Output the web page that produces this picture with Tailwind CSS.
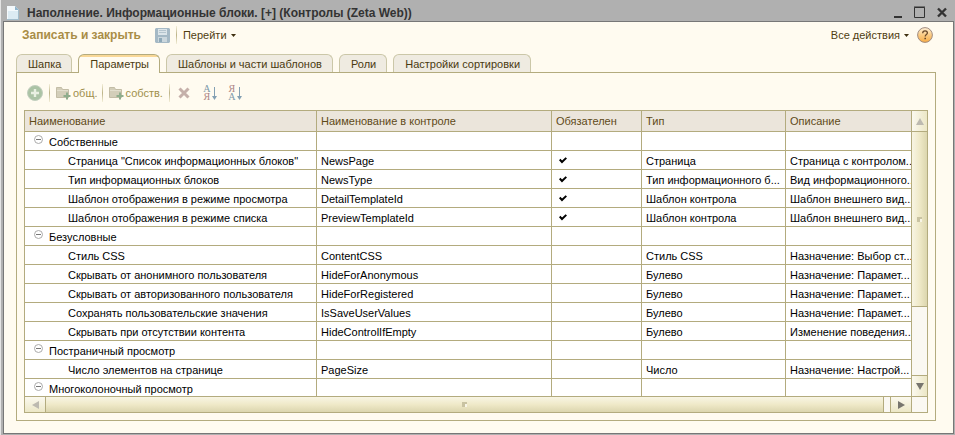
<!DOCTYPE html>
<html lang="ru">
<head>
<meta charset="utf-8">
<title>Наполнение. Информационные блоки. [+] (Контролы (Zeta Web))</title>
<script src="https://cdn.jsdelivr.net/npm/@tailwindcss/browser@4"></script>
</head>
<body class="h-screen overflow-hidden bg-[#b0b0b0] font-['Liberation_Sans',Arial,sans-serif] text-[11px] leading-4 text-black">
<div class="flex h-full flex-col border-l border-[#e4e4e4] pr-px pb-px pl-0.5">

  <header class="flex h-[21px] shrink-0 items-center pt-1 pr-1.5 pl-1">
    <svg class="mr-2 h-3.5 w-3 shrink-0" viewBox="0 0 12 14" aria-hidden="true">
      <path d="M0 0h8l4 4v10H0z" fill="#f4f9fc"/><path d="M1 5h10v8H1z" fill="#dcebf3"/><path d="M8 0v4h4z" fill="#8fb4cb"/><path d="M0 13.5h12M11.5 4v10" stroke="#a3bdcc" fill="none"/>
    </svg>
    <h1 class="flex-1 truncate text-[12px] leading-4 font-bold text-[#333]">Наполнение. Информационные блоки. [+] (Контролы (Zeta Web))</h1>
    <div class="flex items-center gap-2.5 pb-0.5 text-[#333]">
      <button aria-label="Свернуть" class="size-3"><svg viewBox="0 0 12 12" class="size-3"><path d="M2 11h8" stroke="currentColor" stroke-width="2"/></svg></button>
      <button aria-label="Развернуть" class="size-3"><svg viewBox="0 0 12 12" class="size-3"><path d="M.5 1.5h10v10h-10z" fill="none" stroke="currentColor"/><path d="M0 1h11" stroke="currentColor" stroke-width="1"/></svg></button>
      <button aria-label="Закрыть" class="size-3"><svg viewBox="0 0 12 12" class="size-3"><path d="M2 2.500l8 8M10 2.500l-8 8" stroke="currentColor" stroke-width="2.4"/></svg></button>
    </div>
  </header>

  <main class="flex min-h-0 flex-1 flex-col border border-[#777] bg-[#fffbf0] pr-[17px] pb-3 pl-3">

    <div class="flex h-[26px] shrink-0 items-center pr-[3px] pl-1.5 text-[#4f3d10]">
      <button class="mr-3.5 text-[12px] font-bold text-[#a98d46]">Записать и закрыть</button>
      <button aria-label="Записать" class="mr-1.5 size-[15px]">
        <svg viewBox="0 0 15 15" class="size-[15px]"><path d="M1 0h13l1 1v13l-1 1H1l-1-1V1z" fill="#a5b9c5"/><path d="M3 1h9v6H3z" fill="#dce5e9"/><path d="M4 2.5h7M4 4.5h7" stroke="#b5c5ce"/><path d="M3 9h9v5H3z" fill="#cbd7dd"/><path d="M4 10h3v4H4z" fill="#8fa9b8"/></svg>
      </button>
      <span class="mr-1.5 h-[18px] w-px bg-linear-to-b from-[#f3eed8] via-[#bdb488] to-[#f3eed8]"></span>
      <button class="flex items-center gap-1">Перейти
        <svg viewBox="0 0 5 3" class="h-[3px] w-[5px]"><path d="M0 0h5L2.500 3z" fill="#3f3010"/></svg></button>
      <span class="flex-1"></span>
      <button class="mr-2 flex items-center gap-1">Все действия
        <svg viewBox="0 0 5 3" class="h-[3px] w-[5px]"><path d="M0 0h5L2.500 3z" fill="#3f3010"/></svg></button>
      <button aria-label="Справка" class="size-4">
        <svg viewBox="0 0 16 16" class="size-4"><defs><linearGradient id="help" x1="0" y1="0" x2="0" y2="1"><stop offset="0" stop-color="#fff0d8"/><stop offset=".5" stop-color="#fbcb83"/><stop offset="1" stop-color="#f8ac45"/></linearGradient></defs><circle cx="8" cy="8" r="7.400" fill="url(#help)" stroke="#a08c80"/><path d="M5.700 6.200c0-3 4.700-3 4.700-.3 0 1.500-2.200 1.700-2.200 3.500" fill="none" stroke="#6b4a2a" stroke-width="1.300"/><path d="M7.400 10.700h1.600v1.600H7.400z" fill="#6b4a2a"/></svg>
      </button>
    </div>

    <nav class="relative z-10 mt-1.5 -mb-px flex h-[19px] shrink-0 items-start gap-1.5 text-[#4a3a10]" role="tablist">
      <button role="tab" class="h-[18px] rounded-t-md border border-b-0 border-[#cbc7a8] bg-[#efebe1] pr-2.5 pl-[11px]">Шапка</button>
      <button role="tab" aria-selected="true" class="h-[19px] rounded-t-md border border-b-0 border-[#b3ab7e] bg-[#fffbf0] bg-linear-to-b from-[#f9d897] from-[2px] to-[#fffbf0] to-[2px] pr-2.5 pb-px pl-[11px]">Параметры</button>
      <button role="tab" class="h-[18px] rounded-t-md border border-b-0 border-[#cbc7a8] bg-[#efebe1] pr-2.5 pl-[11px]">Шаблоны и части шаблонов</button>
      <button role="tab" class="h-[18px] rounded-t-md border border-b-0 border-[#cbc7a8] bg-[#efebe1] pr-2.5 pl-[11px]">Роли</button>
      <button role="tab" class="h-[18px] rounded-t-md border border-b-0 border-[#cbc7a8] bg-[#efebe1] pr-2.5 pl-[11px]">Настройки сортировки</button>
    </nav>

    <section class="flex min-h-0 flex-1 flex-col border border-[#b3ab7e] px-[7px] pb-[7px]">
      <div class="flex h-[37px] shrink-0 items-center pt-0.5 pl-[3px] text-[#a08f4c]">
        <button aria-label="Добавить" class="mr-1.5 size-4"><svg viewBox="0 0 16 16" class="size-4"><circle cx="8" cy="8" r="7.500" fill="#abc3a5" stroke="#c3cfbf"/><path d="M8 4v8M4 8h8" stroke="#e9f0e2" stroke-width="2.400"/></svg></button>
        <span class="mr-1.5 h-[18px] w-px bg-linear-to-b from-[#f3eed8] via-[#bdb488] to-[#f3eed8]"></span>
        <button class="mr-1 flex items-center gap-0.5"><svg viewBox="0 0 15 14" class="h-3.5 w-[15px]"><path d="M.5 1.500h5l1 2h6v8H.5z" fill="#d3ceb9" stroke="#c3bda6"/><path d="M1 4.500h11" stroke="#e3dfce"/><path d="M11 6.500v7M7.500 10h7" stroke="#8fad8c" stroke-width="2"/></svg>общ.</button>
        <span class="mr-1.5 h-[18px] w-px bg-linear-to-b from-[#f3eed8] via-[#bdb488] to-[#f3eed8]"></span>
        <button class="mr-1.5 flex items-center gap-0.5"><svg viewBox="0 0 15 14" class="h-3.5 w-[15px]"><path d="M.5 1.500h5l1 2h6v8H.5z" fill="#d3ceb9" stroke="#c3bda6"/><path d="M1 4.500h11" stroke="#e3dfce"/><path d="M11 6.500v7M7.500 10h7" stroke="#8fad8c" stroke-width="2"/></svg>собств.</button>
        <span class="mr-2 h-[18px] w-px bg-linear-to-b from-[#f3eed8] via-[#bdb488] to-[#f3eed8]"></span>
        <button aria-label="Удалить" class="mr-3 size-3"><svg viewBox="0 0 12 12" class="size-3"><path d="M1.500 1.500l9 9M10.500 1.500l-9 9" stroke="#c5b0aa" stroke-width="3"/></svg></button>
        <button aria-label="Сортировать по возрастанию" class="mr-2.5 flex h-4 w-[15px] font-['Liberation_Serif',serif] text-[10px] leading-2"><span class="w-2.5 text-center"><span class="block text-[#7d9aab]">А</span><span class="block text-[#ab8585]">Я</span></span><svg viewBox="0 0 5 16" class="h-4 w-[5px]"><path d="M2.500 2v10" stroke="#83a0b3"/><path d="M0 11h5l-2.500 4z" fill="#83a0b3"/></svg></button>
        <button aria-label="Сортировать по убыванию" class="flex h-4 w-[15px] font-['Liberation_Serif',serif] text-[10px] leading-2"><span class="w-2.5 text-center"><span class="block text-[#ab8585]">Я</span><span class="block text-[#7d9aab]">А</span></span><svg viewBox="0 0 5 16" class="h-4 w-[5px]"><path d="M2.500 2v10" stroke="#83a0b3"/><path d="M0 11h5l-2.500 4z" fill="#83a0b3"/></svg></button>
      </div>

      <div class="grid min-h-0 flex-1 grid-cols-[minmax(0,1fr)_16px] grid-rows-[minmax(0,1fr)_16px] border border-[#b3ab7e] bg-white">
        <div class="overflow-hidden">
          <table class="w-full table-fixed border-separate border-spacing-0 text-left [&_td]:h-[19px] [&_td]:overflow-hidden [&_td]:border-r [&_td]:border-b [&_td]:border-[#b3ab7e] [&_td]:p-0 [&_td]:pt-px [&_td]:pl-1 [&_td]:whitespace-nowrap [&_td:last-child]:border-r-0 [&_th]:h-[21px] [&_th]:border-r [&_th]:border-b [&_th]:border-[#b3ab7e] [&_th]:bg-[#ebe5db] [&_th]:p-0 [&_th]:pl-1 [&_th]:font-normal [&_th]:text-[#5f4a18] [&_th:last-child]:border-r-0">
            <colgroup><col class="w-[292px]"><col class="w-[235px]"><col class="w-[90px]"><col class="w-[144px]"><col></colgroup>
            <thead><tr><th>Наименование</th><th>Наименование в контроле</th><th>Обязателен</th><th>Тип</th><th>Описание</th></tr></thead>
            <tbody id="rows"></tbody>
          </table>
        </div>

        <div class="flex flex-col border-l border-[#b3ab7e] bg-[#faf8f2]">
          <button aria-label="Вверх" class="flex h-[21px] items-center justify-center border-b border-[#b3ab7e] bg-linear-to-r from-[#fbf9ef] to-[#ece7c6]"><svg viewBox="0 0 8 7" class="h-[7px] w-2"><path d="M4 0l4 7H0z" fill="#bdbab0"/></svg></button>
          <div class="flex h-[175px] items-center justify-center border-b border-[#b3ab7e] bg-linear-to-r from-[#f8f5e4] via-[#efe9c8] to-[#dcd6ae]"><svg viewBox="0 0 5 5" class="size-[5px]"><path d="M0 0h5v2H3v3H0z" fill="#c9c3a2"/><path d="M3 2h2v3H3z" fill="#f8f5e6"/></svg></div>
          <div class="flex-1"></div>
          <button aria-label="Вниз" class="flex h-[21px] items-center justify-center border-t border-[#b3ab7e] bg-linear-to-r from-[#fbf9ef] to-[#ece7c6]"><svg viewBox="0 0 8 7" class="h-[7px] w-2"><path d="M0 0h8L4 7z" fill="#77756e"/></svg></button>
        </div>

        <div class="flex border-t border-[#b3ab7e] bg-[#faf8f2]">
          <button aria-label="Влево" class="flex w-[21px] items-center justify-center border-r border-[#b3ab7e] bg-linear-to-b from-[#fbf9ef] to-[#ece7c6]"><svg viewBox="0 0 7 8" class="h-2 w-[7px]"><path d="M7 0v8L0 4z" fill="#bdbab0"/></svg></button>
          <div class="flex flex-1 items-center justify-center border-r border-[#b3ab7e] bg-linear-to-b from-[#f8f5e4] via-[#efe9c8] to-[#dcd6ae]"><svg viewBox="0 0 5 5" class="size-[5px]"><path d="M0 0h5v2H3v3H0z" fill="#c9c3a2"/><path d="M3 2h2v3H3z" fill="#f8f5e6"/></svg></div>
          <div class="w-1.5"></div>
          <button aria-label="Вправо" class="flex w-[21px] items-center justify-center border-l border-[#b3ab7e] bg-linear-to-b from-[#fbf9ef] to-[#ece7c6]"><svg viewBox="0 0 7 8" class="h-2 w-[7px]"><path d="M0 0v8l7-4z" fill="#77756e"/></svg></button>
        </div>
        <div class="border-t border-l border-[#b3ab7e] bg-[#faf8f2]"></div>
      </div>
    </section>
  </main>
</div>
<script>
const check = '<svg role="img" aria-label="Да" viewBox="0 0 8 7" class="ml-[3px] h-[7px] w-2"><path d="M.7 2.500L3 5 7.300.9" fill="none" stroke="#000" stroke-width="2"/></svg>';
const minus = '<button aria-label="Свернуть группу" class="mr-1.5 mb-1 size-[9px]"><svg viewBox="0 0 9 9" class="size-[9px]"><circle cx="4.500" cy="4.500" r="4" fill="#fff" stroke="#aaa"/><path d="M2 4.500h5" stroke="#777"/></svg></button>';
const data = [
  ['Собственные'],
  ['Страница "Список информационных блоков"', 'NewsPage', 1, 'Страница', 'Страница с контролом...'],
  ['Тип информационных блоков', 'NewsType', 1, 'Тип информационного б...', 'Вид информационного...'],
  ['Шаблон отображения в режиме просмотра', 'DetailTemplateId', 1, 'Шаблон контрола', 'Шаблон внешнего вид...'],
  ['Шаблон отображения в режиме списка', 'PreviewTemplateId', 1, 'Шаблон контрола', 'Шаблон внешнего вид...'],
  ['Безусловные'],
  ['Стиль CSS', 'ContentCSS', 0, 'Стиль CSS', 'Назначение: Выбор ст...'],
  ['Скрывать от анонимного пользователя', 'HideForAnonymous', 0, 'Булево', 'Назначение: Парамет...'],
  ['Скрывать от авторизованного пользователя', 'HideForRegistered', 0, 'Булево', 'Назначение: Парамет...'],
  ['Сохранять пользовательские значения', 'IsSaveUserValues', 0, 'Булево', 'Назначение: Парамет...'],
  ['Скрывать при отсутствии контента', 'HideControlIfEmpty', 0, 'Булево', 'Изменение поведения...'],
  ['Постраничный просмотр'],
  ['Число элементов на странице', 'PageSize', 0, 'Число', 'Назначение: Настрой...'],
  ['Многоколоночный просмотр'],
];
document.getElementById('rows').innerHTML = data.map(r => r.length === 1
  ? `<tr><td><div class="flex items-center pl-[5px]">${minus}${r[0]}</div></td><td></td><td></td><td></td><td></td></tr>`
  : `<tr><td><div class="pl-[39px]">${r[0]}</div></td><td>${r[1]}</td><td>${r[2] ? check : ''}</td><td>${r[3]}</td><td>${r[4]}</td></tr>`).join('');
</script>
</body>
</html>
